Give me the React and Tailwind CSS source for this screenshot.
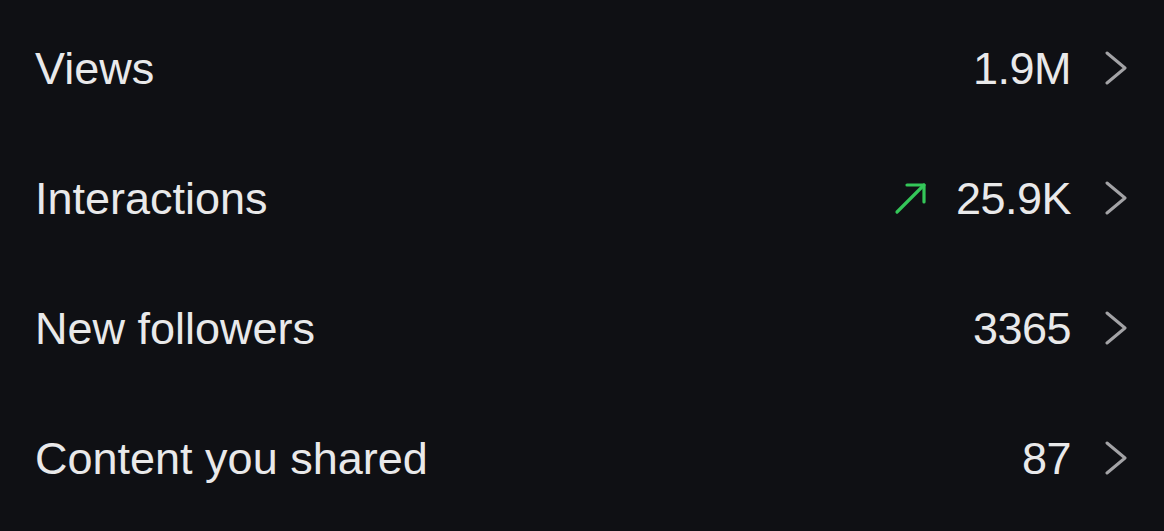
const rows = [
    { label: 'Views', value: '1.9M' },
    { label: 'Interactions', value: '25.9K', trend: true },
    { label: 'New followers', value: '3365' },
    { label: 'Content you shared', value: '87' },
];

function TrendArrow() {
    return (
        <svg width="34" height="34" viewBox="0 0 34 34" fill="none" stroke="#34c759" strokeWidth="3.2" strokeLinecap="round" strokeLinejoin="round">
            <path d="M3 31 L30 4" />
            <path d="M13 4 H30 V21" />
        </svg>
    );
}

function Chevron() {
    return (
        <svg width="24" height="34" viewBox="0 0 24 34" fill="none" stroke="#a3a3a6" strokeWidth="3" strokeLinecap="round" strokeLinejoin="round">
            <path d="M3 2 L21 17 L3 32" />
        </svg>
    );
}

export default function App() {
    return (
        <div className="w-[1164px] h-[531px] bg-[#0f1014] pt-[3px] font-['Liberation_Sans',Arial,sans-serif] text-[#e9e9ea]">
            {rows.map((row) => (
                <div key={row.label} className="h-[130px] flex items-center pl-[35px] pr-[36px]">
                    <span className="text-[45px] leading-none flex-1">{row.label}</span>
                    <div className="flex items-center">
                        {row.trend && (
                            <div className="mr-[28px]">
                                <TrendArrow />
                            </div>
                        )}
                        <span className="text-[45px] leading-none tracking-[-0.5px]">{row.value}</span>
                        <div className="ml-[33px]">
                            <Chevron />
                        </div>
                    </div>
                </div>
            ))}
        </div>
    );
}
